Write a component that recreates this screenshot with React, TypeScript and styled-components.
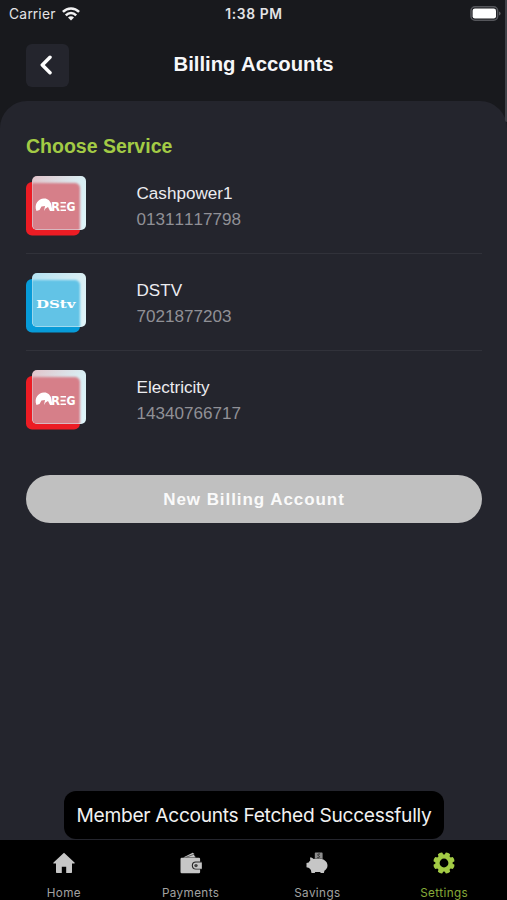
import React from "react";
import styled, { createGlobalStyle } from "styled-components";

const Global = createGlobalStyle`
  * { box-sizing: border-box; }
  html, body { margin: 0; background: #18191d; }
  body { overflow: hidden; font-family: "Liberation Sans", Arial, sans-serif; font-kerning: none; }
`;

const Screen = styled.div`
  position: relative;
  width: 507px;
  height: 900px;
  display: flex;
  flex-direction: column;
  overflow: hidden;
  background: #18191d;
`;

const StatusBar = styled.div`
  height: 27px;
  padding: 0 6px 0 9px;
  display: grid;
  grid-template-columns: 1fr auto 1fr;
  align-items: center;
  font-family: Inter, sans-serif;
  color: #e3e3e6;
`;

const Carrier = styled.div`
  display: flex;
  align-items: center;
  gap: 6px;
  font-size: 13.8px;
  letter-spacing: 0.28px;
`;

const Clock = styled.div`
  margin-left: -2px;
  font-size: 13.8px;
  font-weight: 600;
  letter-spacing: 0.65px;
`;

const Battery = styled.div`
  justify-self: end;
  display: flex;
`;

const Header = styled.header`
  height: 74px;
  padding: 17px 26px 0;
  display: grid;
  grid-template-columns: 43px 1fr 43px;
  align-items: start;
`;

const BackButton = styled.button`
  width: 43px;
  height: 43px;
  padding: 0 3px 1px 0;
  border: 0;
  border-radius: 6px;
  background: #24252d;
  display: grid;
  place-items: center;
`;

const Title = styled.h1`
  margin: 0;
  text-align: center;
  font-size: 20.3px;
  line-height: 40px;
  color: #f7f7f9;
`;

const Panel = styled.main`
  flex: 1;
  padding: 34px 25px 0 26px;
  border-radius: 27px 27px 0 0;
  background: #24252d;
`;

const SectionTitle = styled.h2`
  margin: 0;
  height: 22px;
  line-height: 23px;
  font-size: 19.5px;
  color: #a3cb45;
`;

const Account = styled.div`
  height: 97px;
  padding-top: 18px;
  display: flex;
  align-items: flex-start;
  gap: 50.5px;
  border-bottom: 1px solid transparent;

  &:not(:last-child) { border-color: #31323a; }
`;

const AccountText = styled.div`
  padding-top: 6px;
  font-size: 17.1px;
  line-height: 26px;
`;

const AccountName = styled.div`
  color: #ececf0;
`;

const AccountNumber = styled.div`
  color: #909096;
`;

const NewAccount = styled.button`
  display: block;
  width: 456px;
  height: 48px;
  margin-top: 27px;
  padding: 2px 0 0;
  border: 0;
  border-radius: 24px;
  background: #c0c0c0;
  color: #fafafa;
  font: bold 17px "Liberation Sans", Arial, sans-serif;
  letter-spacing: 0.94px;
`;

const Toast = styled.div`
  position: absolute;
  left: 64px;
  top: 791px;
  width: 380px;
  height: 48px;
  border-radius: 12px;
  background: #000;
  color: #f1f1f1;
  text-align: center;
  font: 19.2px/48px Inter, sans-serif;
  letter-spacing: -0.31px;
  white-space: nowrap;
`;

const ScrollThumb = styled.div`
  position: absolute;
  right: 0;
  top: 0;
  width: 2px;
  height: 122px;
  border-radius: 0 0 0 2px;
  background: #414249;
`;

const TabBar = styled.nav`
  height: 60px;
  background: #000;
  display: grid;
  grid-template-columns: repeat(4, 1fr);
`;

const Tab = styled.div<{ $active?: boolean }>`
  padding: 12px 0 0 1px;
  display: flex;
  flex-direction: column;
  align-items: center;
  gap: 11px;
  color: ${(p) => (p.$active ? "#a3cb45" : "#c6c6c6")};
`;

const TabLabel = styled.span<{ $active?: boolean }>`
  font: 11.7px/16px Inter, sans-serif;
  letter-spacing: 0.4px;
  color: ${(p) => (p.$active ? "#86aa38" : "#a2a2a2")};
`;

const LogoMark = styled.text<{ $serif?: boolean }>`
  font-family: ${(p) => (p.$serif ? '"DejaVu Serif", serif' : '"DejaVu Sans", sans-serif')};
  font-weight: bold;
  fill: #fff;
`;

function ServiceLogo({ brand }: { brand: "reg" | "dstv" }) {
  const reg = brand === "reg";
  const id = React.useId();
  return (
    <svg width="60" height="61" viewBox="0 0 60 61">
      <defs>
        <linearGradient id={`${id}glass`} x1="0" y1="0" x2="1" y2="1">
          <stop offset="0" stopColor={reg ? "#e2c3ca" : "#b4e3f3"} />
          <stop offset=".5" stopColor="#d9eef3" />
          <stop offset="1" stopColor="#e0f5fa" />
        </linearGradient>
        <filter id={`${id}soft`} x="-10%" y="-10%" width="120%" height="120%">
          <feGaussianBlur stdDeviation="0.9" />
        </filter>
        <clipPath id={`${id}clip`}>
          <rect x="6.5" y="2" width="53" height="52.5" rx="4.5" />
        </clipPath>
      </defs>
      <rect x="0" y="7" width="54" height="53.5" rx="6" fill={reg ? "#ec1c24" : "#079bd8"} />
      <rect x="6" y="1" width="54" height="54" rx="5" fill={`url(#${id}glass)`} />
      <g clipPath={`url(#${id}clip)`}>
        <rect
          x="3"
          y="8"
          width="51"
          height="51"
          rx="5"
          fill={reg ? "#d67f89" : "#62c3e6"}
          filter={`url(#${id}soft)`}
        />
      </g>
      {reg ? (
        <>
          <path d="M10.5 36C7.5 29 13 23 18.5 23.5c3.2 0 5.5 2.5 6.5 5l1.5 7.5h-2.5l-2-4-2.5 1.5-1.5 2.5 1-5-3.5.5-2 3.5z" fill="#fff" />
          <LogoMark x="25" y="36" fontSize="12.5" textLength="9" lengthAdjust="spacingAndGlyphs">R</LogoMark>
          <path d="M34.5 27.8H40M34.5 31.6h5M34.5 35.3H40" stroke="#fff" strokeWidth="1.6" />
          <LogoMark x="40.5" y="36" fontSize="12.5" textLength="9" lengthAdjust="spacingAndGlyphs">G</LogoMark>
        </>
      ) : (
        <LogoMark $serif x="10" y="35.5" fontSize="11.5" textLength="39.5" lengthAdjust="spacingAndGlyphs">DStv</LogoMark>
      )}
    </svg>
  );
}

const accounts = [
  { name: "Cashpower1", number: "01311117798", brand: "reg" },
  { name: "DSTV", number: "7021877203", brand: "dstv" },
  { name: "Electricity", number: "14340766717", brand: "reg" },
] as const;

const HomeIcon = () => (
  <svg width="22" height="22" viewBox="0 0 22 22">
    <path d="M11 .7.5 10.4c-.5.6-.2 1 .4 1H3V20c0 .8.4 1.1 1 1.1h4.8v-6.3h4.4v6.3H18c.7 0 1-.4 1-1.1v-8.6h2.1c.6 0 .9-.5.4-1z" fill="currentColor" />
  </svg>
);

const WalletIcon = () => (
  <svg width="22" height="22" viewBox="0 0 22 22">
    <path d="m3.2 5.5 8.9-4.6c.6-.3 1-.1 1.3.4l2.2 4.2z" fill="currentColor" />
    <path d="m6 5.3 7.7-2.9 2.1 2.9" stroke="#333" strokeWidth=".7" fill="none" />
    <rect x=".5" y="5.8" width="19.6" height="15.4" rx="1.2" fill="currentColor" />
    <path d="M22 9.6h-6.2a4 4 0 0 0 0 8H22z" fill="#262626" />
    <path d="M21.8 10.5H16a3.1 3.1 0 0 0 0 6.2h5.8z" fill="currentColor" />
    <circle cx="16" cy="13.6" r="1.7" fill="#444" />
  </svg>
);

const PiggyIcon = () => (
  <svg width="22" height="22" viewBox="0 0 22 22">
    <path d="M4 5.4c1.9 0 2.9.7 3.7 1.7 1.2-.5 2.7-.6 4.1-.6 5.800 0 9.7 2.7 9.7 7 0 2.4-1.3 4-3.1 5.2l-.5 2.4h-3.2l-.5-1.2h-5l-.5 1.2H5.5l-.7-3.3c-.7-.5-1.2-1-1.6-1.9L.5 15.2v-4.1l2.2-.5c.3-.8.7-1.5 1.6-2.200z" fill="currentColor" />
    <path d="M8.8 6V1.6c0-.6.4-1 1-1h5.8c.6 0 1 .4 1 1V7c-2.2-.8-5-.9-7.8-.5z" fill="#8c8c8c" />
    <path d="M14 2.1c-2.1-.5-3.3 1-1.4 1.7 2 .7.7 2.4-1.3 1.8" stroke="#292929" strokeWidth="1" fill="none" />
  </svg>
);

const GearIcon = () => (
  <svg width="22" height="22" viewBox="0 0 22 22">
    <g fill="currentColor">
      {[22.5, 67.5, 112.5, 157.5, 202.5, 247.5, 292.5, 337.5].map((a) => (
        <path key={a} d="M8 5 8.7.6Q11-.5 13.3.6L14 5z" transform={`rotate(${a} 11 11)`} />
      ))}
    </g>
    <circle cx="11" cy="11" r="6.5" fill="none" stroke="currentColor" strokeWidth="4.2" />
  </svg>
);

const tabs = [
  { label: "Home", Icon: HomeIcon },
  { label: "Payments", Icon: WalletIcon },
  { label: "Savings", Icon: PiggyIcon },
  { label: "Settings", Icon: GearIcon, active: true },
];

export default function App() {
  return (
    <Screen>
      <Global />
      <StatusBar>
        <Carrier>
          Carrier
          <svg width="18" height="14" viewBox="0 0 18 14">
            <g fill="none" stroke="#f2f2f3" strokeWidth="2.5">
              <path d="M.9 4.9C5.5.3 12.5.3 17.1 4.9" />
              <path d="M3.8 8.3c3-3 7.4-3 10.4 0" />
            </g>
            <path d="m9 13.6-3-3.2c1.8-1.6 4.2-1.6 6 0z" fill="#f2f2f3" />
          </svg>
        </Carrier>
        <Clock>1:38 PM</Clock>
        <Battery>
          <svg width="31" height="15" viewBox="0 0 31 15">
            <rect x="1" y=".8" width="26.6" height="13.4" rx="4" fill="none" stroke="#55565b" strokeWidth="1.6" />
            <rect x="2.6" y="2.4" width="23.4" height="10.2" rx="2.3" fill="#fff" />
            <path d="M29 5.5q1.6.5 1.6 2T29 9.500z" fill="#606166" />
          </svg>
        </Battery>
      </StatusBar>
      <Header>
        <BackButton aria-label="Back">
          <svg width="14" height="20" viewBox="0 0 14 20">
            <path d="M11 2.300 3.300 10l7.700 7.700" fill="none" stroke="#fff" strokeWidth="3.5" strokeLinecap="round" strokeLinejoin="round" />
          </svg>
        </BackButton>
        <Title>Billing Accounts</Title>
      </Header>
      <Panel>
        <SectionTitle>Choose Service</SectionTitle>
        <div>
          {accounts.map((a) => (
            <Account key={a.name}>
              <ServiceLogo brand={a.brand} />
              <AccountText>
                <AccountName>{a.name}</AccountName>
                <AccountNumber>{a.number}</AccountNumber>
              </AccountText>
            </Account>
          ))}
        </div>
        <NewAccount>New Billing Account</NewAccount>
      </Panel>
      <TabBar>
        {tabs.map(({ label, Icon, active }) => (
          <Tab key={label} $active={active}>
            <Icon />
            <TabLabel $active={active}>{label}</TabLabel>
          </Tab>
        ))}
      </TabBar>
      <Toast>Member Accounts Fetched Successfully</Toast>
      <ScrollThumb />
    </Screen>
  );
}
